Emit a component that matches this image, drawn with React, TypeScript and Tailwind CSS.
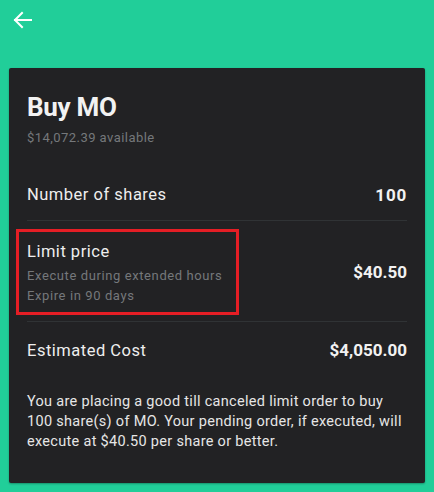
import React from "react";

export default function App() {
  return (
    <div
      className="w-[434px] h-[492px] bg-[#21ce99] overflow-hidden"
      style={{ fontFamily: "Roboto, 'Liberation Sans', sans-serif" }}
    >
      <div className="h-[68px] pl-[13px] pt-[11px]">
        <svg width="19" height="18" viewBox="0 0 19 18" fill="none" stroke="white" strokeWidth="2" strokeLinecap="square">
          <path d="M2 9H18" />
          <path d="M9 2L2 9L9 16" />
        </svg>
      </div>
      <div className="mx-[9px] h-[415px] bg-[#222224] rounded-[2px] shadow-[0_1px_2px_rgba(0,0,0,0.3)] px-[18px] pt-[22px]">
        <div className="text-[26px] font-bold text-[#f2f2f2] leading-[34px] tracking-[-0.3px]">Buy MO</div>
        <div className="text-[13px] text-[#75787b] mt-[5px] leading-[18px] tracking-[0.45px]">$14,072.39 available</div>
        <div className="flex items-center justify-between h-[46px] mt-[28px] border-b border-[#303335] pb-[4px]">
          <span className="text-[16.5px] text-[#eeeeee] tracking-[0.5px]">Number of shares</span>
          <span className="text-[17px] font-bold text-[#f2f2f2] tracking-[0.8px]">100</span>
        </div>
        <div className="flex items-center justify-between h-[101px] border-b border-[#303335] relative">
          <div className="absolute left-[-11px] top-[8px] w-[223px] h-[86px] border-[3px] border-[#e51e25]" />
          <div className="flex flex-col pt-[4px]">
            <span className="text-[16.5px] text-[#eeeeee] leading-[22px] tracking-[0.5px]">Limit price</span>
            <span className="text-[13px] text-[#75787b] leading-[20px] mt-[3px] tracking-[0.6px]">Execute during extended hours</span>
            <span className="text-[13px] text-[#75787b] leading-[20px] tracking-[0.6px]">Expire in 90 days</span>
          </div>
          <span className="text-[17px] font-bold text-[#f2f2f2] pt-[4px]">$40.50</span>
        </div>
        <div className="flex items-center justify-between h-[58px]">
          <span className="text-[16.5px] text-[#eeeeee] tracking-[0.5px]">Estimated Cost</span>
          <span className="text-[17px] font-bold text-[#f2f2f2]">$4,050.00</span>
        </div>
        <p className="text-[14.5px] text-[#e6e6e6] leading-[20px] mt-[12px] tracking-[0.3px] whitespace-nowrap">
          You are placing a good till canceled limit order to buy
          <br />
          100 share(s) of MO. Your pending order, if executed, will
          <br />
          execute at $40.50 per share or better.
        </p>
      </div>
    </div>
  );
}
